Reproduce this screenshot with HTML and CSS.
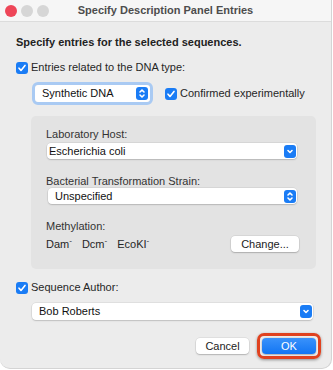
FILE: index.html
```html
<!DOCTYPE html>
<html>
<head>
	<meta charset="utf-8">
	<title>Specify Description Panel Entries</title>
	<link rel="stylesheet" href="styles.css">
</head>
<body>
<div class="window">
	<div class="titlebar">
		<div class="lights">
			<span class="light red"></span>
			<span class="light"></span>
			<span class="light"></span>
		</div>
		<div class="title">Specify Description Panel Entries</div>
	</div>
	<div class="content">
		<div class="heading">Specify entries for the selected sequences.</div>

		<div class="check-row">
			<span class="checkbox"><svg viewBox="0 0 12 12"><path d="M3 6.2l2 2.2 4-5" /></svg></span>
			<span>Entries related to the DNA type:</span>
		</div>

		<div class="dna-row">
			<div class="focus">
				<div class="popup small">
					<span class="label">Synthetic DNA</span>
					<span class="arrows"><svg viewBox="0 0 12 13"><path d="M4 5l2-2 2 2M4 8l2 2 2-2" /></svg></span>
				</div>
			</div>
			<div class="check-row inline">
				<span class="checkbox"><svg viewBox="0 0 12 12"><path d="M3 6.2l2 2.2 4-5" /></svg></span>
				<span>Confirmed experimentally</span>
			</div>
		</div>

		<div class="box">
			<div class="field-label">Laboratory Host:</div>
			<div class="popup host">
				<span class="label">Escherichia coli</span>
				<span class="arrows"><svg viewBox="0 0 12 13"><path d="M4 5.5l2 2 2-2" /></svg></span>
			</div>

			<div class="field-label second">Bacterial Transformation Strain:</div>
			<div class="popup strain">
				<span class="label">Unspecified</span>
				<span class="arrows"><svg viewBox="0 0 12 13"><path d="M4 5l2-2 2 2M4 8l2 2 2-2" /></svg></span>
			</div>

			<div class="field-label third">Methylation:</div>
			<div class="meth-row">
				<span class="meth">Dam<sup>-</sup></span>
				<span class="meth">Dcm<sup>-</sup></span>
				<span class="meth">EcoKI<sup>-</sup></span>
				<span class="button change">Change...</span>
			</div>
		</div>

		<div class="check-row author">
			<span class="checkbox"><svg viewBox="0 0 12 12"><path d="M3 6.2l2 2.2 4-5" /></svg></span>
			<span>Sequence Author:</span>
		</div>
		<div class="popup author-popup">
			<span class="label">Bob Roberts</span>
			<span class="arrows"><svg viewBox="0 0 12 13"><path d="M4 5.5l2 2 2-2" /></svg></span>
		</div>

		<div class="buttons">
			<span class="button cancel">Cancel</span>
			<span class="ok-ring"><span class="button ok">OK</span></span>
		</div>
	</div>
</div>
</body>
</html>
```

FILE: styles.css
```css
*
{
	padding: 0px;
	margin: 0px;
	box-sizing: border-box;
}
body
{
	background-color: white;
	font-family: "Liberation Sans", Arial, sans-serif;
	font-size: 11px;
	line-height: 13px;
	color: #262626;
}
.window
{
	width: 332px;
	height: 369px;
	background-color: #ececec;
	border-right: 1px solid #d4d4d4;
	border-bottom: 1px solid #d4d4d4;
	border-radius: 0 0 10px 10px;
	overflow: hidden;
}
.titlebar
{
	height: 22px;
	background-color: #f6f6f6;
	border-bottom: 1px solid #dcdcdc;
	display: flex;
	align-items: center;
}
.lights
{
	display: flex;
	gap: 4px;
	padding-left: 5px;
	width: 49px;
}
.light
{
	width: 12px;
	height: 12px;
	border-radius: 50%;
	background-color: #d6d6d6;
}
.light.red
{
	background-color: #ee4658;
}
.title
{
	flex: 1;
	text-align: center;
	font-weight: bold;
	color: #4d4d4d;
	margin-right: 49px;
}
.content
{
	padding: 14px 10px 0 16px;
}
.heading
{
	font-weight: bold;
	color: #222;
}
.check-row
{
	display: flex;
	align-items: center;
	gap: 3px;
	margin-top: 12px;
	white-space: nowrap;
}
.check-row.inline
{
	margin-top: 0;
	margin-left: 12px;
}
.checkbox
{
	width: 12px;
	height: 12px;
	border-radius: 3px;
	background-color: #1a7cf5;
	display: inline-flex;
}
.checkbox svg, .arrows svg
{
	width: 100%;
	height: 100%;
	fill: none;
	stroke: white;
	stroke-width: 1.6;
	stroke-linecap: round;
	stroke-linejoin: round;
}
.dna-row
{
	display: flex;
	align-items: center;
	margin-top: 8px;
	padding-left: 16px;
}
.focus
{
	border: 3px solid #a9caf3;
	border-radius: 6px;
}
.popup
{
	display: flex;
	align-items: center;
	height: 16px;
	background-color: white;
	border-radius: 4px;
	box-shadow: 0 0 0 0.5px rgba(0, 0, 0, 0.1), 0 1px 1.5px rgba(0, 0, 0, 0.15);
	padding: 0 1px 0 2px;
	color: #111;
}
.popup.small
{
	width: 115px;
	height: 17px;
	padding: 0 2px 0 7px;
	box-shadow: none;
}
.popup .label
{
	flex: 1;
}
.arrows
{
	width: 12px;
	height: 13px;
	border-radius: 3px;
	background-color: #1a7cf5;
	display: inline-flex;
}
.box
{
	margin: 11px 0 0 15px;
	width: 285px;
	height: 153px;
	background-color: #e3e3e3;
	border-radius: 5px;
	padding: 12px 0 0 15px;
}
.field-label
{
	color: #333;
}
.popup.host
{
	margin: 2px 0 0 1px;
	width: 250px;
}
.popup.strain
{
	margin: 0 0 0 2px;
	width: 249px;
	padding-left: 7px;
}
.field-label.second
{
	margin-top: 16px;
}
.field-label.third
{
	margin-top: 16px;
}
.meth-row
{
	display: flex;
	align-items: center;
	width: 253px;
	margin-top: 3px;
}
.meth
{
	margin-right: 10px;
}
.meth sup
{
	font-size: 8px;
	line-height: 0;
}
.button
{
	display: inline-flex;
	align-items: center;
	justify-content: center;
	height: 16px;
	background-color: white;
	border-radius: 4px;
	box-shadow: 0 0 0 0.5px rgba(0, 0, 0, 0.1), 0 1px 1.5px rgba(0, 0, 0, 0.2);
	color: #222;
}
.button.change
{
	margin-left: auto;
	width: 68px;
}
.check-row.author
{
	margin-top: 12px;
}
.author-popup
{
	margin: 9px 0 0 16px;
	width: 281px;
	height: 17px;
	padding-left: 7px;
}
.buttons
{
	display: flex;
	justify-content: flex-end;
	align-items: center;
	gap: 8px;
	margin-top: 13px;
}
.button.cancel
{
	width: 53px;
}
.ok-ring
{
	display: flex;
	border: 3px solid #e0421f;
	border-radius: 7px;
	padding: 2px;
	box-shadow: 0 1px 3px rgba(0, 0, 0, 0.4);
}
.button.ok
{
	width: 54px;
	background: linear-gradient(#3a92fb, #1275f3);
	color: white;
}
```
